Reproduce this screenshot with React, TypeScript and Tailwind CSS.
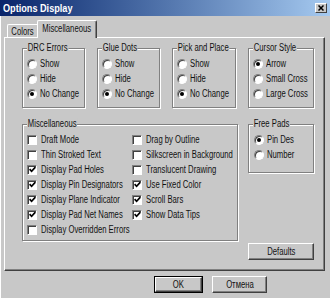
import React from 'react';

// the dialog font is narrower than any installed face, so labels are squeezed horizontally
const T = ({ children, className = '' }: { children: React.ReactNode; className?: string }) => (
  <span className={`inline-block whitespace-nowrap scale-x-[0.77] ${className}`}>{children}</span>
);

const Tick = () => (
  <svg width="7" height="7" viewBox="0 0 7 7">
    <path d="M0.6 3.2 L2.6 5.3 L6.4 1.2" stroke="#000" strokeWidth="1.7" fill="none" />
  </svg>
);

function CheckBox({ label, checked }: { label: string; checked?: boolean }) {
  return (
    <div className="flex items-center h-[15px] gap-[4px]">
      <span className="w-[10px] h-[10px] shrink-0 bg-white border border-t-[#808080] border-l-[#808080] border-r-white border-b-white shadow-[inset_1px_1px_0_#404040] flex items-center justify-center">
        {checked && <Tick />}
      </span>
      <T className="origin-left">{label}</T>
    </div>
  );
}

function Radio({ label, checked }: { label: string; checked?: boolean }) {
  return (
    <div className="flex items-center h-[15px] gap-[3px]">
      <span className="w-[10px] h-[10px] shrink-0 rounded-full bg-white border border-t-[#808080] border-l-[#808080] border-r-white border-b-white shadow-[inset_1px_1px_0_#404040] flex items-center justify-center">
        {checked && <span className="w-[4px] h-[4px] rounded-full bg-black" />}
      </span>
      <T className="origin-left">{label}</T>
    </div>
  );
}

function Group({ title, className, children }: { title: string; className: string; children: React.ReactNode }) {
  return (
    <div className={`relative border border-[#808080] shadow-[inset_1px_1px_0_#fff,1px_1px_0_#fff] ${className}`}>
      <T className="absolute left-[4px] top-[-7px] px-[1px] leading-[12px] bg-[#c8c8c8] origin-left">{title}</T>
      {children}
    </div>
  );
}

function Button({ label, className, isDefault }: { label: string; className: string; isDefault?: boolean }) {
  return (
    <div className={`${isDefault ? 'border border-black' : ''} ${className}`}>
      <div className="w-full h-full flex items-center justify-center border border-t-white border-l-white border-r-[#404040] border-b-[#404040] shadow-[inset_-1px_-1px_0_#808080]">
        <T className="origin-center">{label}</T>
      </div>
    </div>
  );
}

const radioGroups = [
  { title: 'DRC Errors', w: 'w-[63px]', items: ['Show', 'Hide', 'No Change'], sel: 2 },
  { title: 'Glue Dots', w: 'w-[63px]', items: ['Show', 'Hide', 'No Change'], sel: 2 },
  { title: 'Pick and Place', w: 'w-[64px]', items: ['Show', 'Hide', 'No Change'], sel: 2 },
  { title: 'Cursor Style', w: 'w-[66px]', items: ['Arrow', 'Small Cross', 'Large Cross'], sel: 0 },
];

const leftChecks: [string, boolean][] = [
  ['Draft Mode', false],
  ['Thin Stroked Text', false],
  ['Display Pad Holes', true],
  ['Display Pin Designators', true],
  ['Display Plane Indicator', true],
  ['Display Pad Net Names', true],
  ['Display Overridden Errors', false],
];

const rightChecks: [string, boolean][] = [
  ['Drag by Outline', false],
  ['Silkscreen in Background', false],
  ['Translucent Drawing', false],
  ['Use Fixed Color', true],
  ['Scroll Bars', true],
  ['Show Data Tips', true],
];

export default function App() {
  return (
    <div className="w-[330px] h-[298px] overflow-hidden bg-[#c8c8c8] text-[#111] text-[10px] font-['Liberation_Sans',Arial,sans-serif]">
      {/* Title bar */}
      <div className="h-[16px] flex items-center pl-[3px] pr-[3px] bg-linear-to-r from-[#0a246a] to-[#a6caf0]">
        <span className="inline-block origin-left scale-x-[0.83] text-white font-bold text-[11px] leading-none whitespace-nowrap">
          Options Display
        </span>
        <div className="ml-auto w-[12px] h-[10px] bg-[#c8c8c8] border border-t-white border-l-white border-r-[#404040] border-b-[#404040] flex items-center justify-center">
          <svg width="6" height="6" viewBox="0 0 6 6">
            <path d="M0.5 0.5 L5.5 5.5 M5.5 0.5 L0.5 5.5" stroke="#000" strokeWidth="1.5" />
          </svg>
        </div>
      </div>

      <div className="border-l border-l-white h-[282px] pl-[3px] pt-[4px]">
        {/* Tabs */}
        <div className="flex items-end pl-[3px] h-[17px]">
          <div className="w-[30px] h-[13px] flex items-center justify-center border-t border-l border-t-white border-l-white rounded-tl-[2px]">
            <T className="origin-center">Colors</T>
          </div>
          <div className="relative z-10 w-[60px] h-[18px] mb-[-1px] pb-[2px] flex items-center justify-center bg-[#c8c8c8] border-t border-l border-r border-t-white border-l-white border-r-[#404040] shadow-[inset_-1px_0_0_#808080] rounded-t-[2px]">
            <T className="origin-center">Miscellaneous</T>
          </div>
        </div>

        {/* Tab panel */}
        <div className="w-[321px] h-[234px] border border-t-white border-l-white border-r-[#404040] border-b-[#404040] shadow-[inset_-1px_-1px_0_#808080] pt-[10px] pl-[17px]">
          <div className="flex gap-[12px]">
            {radioGroups.map((g) => (
              <Group key={g.title} title={g.title} className={`${g.w} h-[60px] pt-[7px] pl-[4px]`}>
                {g.items.map((it, i) => (
                  <Radio key={it} label={it} checked={i === g.sel} />
                ))}
              </Group>
            ))}
          </div>

          <div className="flex gap-[10px] mt-[16px]">
            <Group title="Miscellaneous" className="w-[216px] h-[117px] pt-[7px] pl-[4px] flex">
              <div className="w-[105px]">
                {leftChecks.map(([l, c]) => (
                  <CheckBox key={l} label={l} checked={c} />
                ))}
              </div>
              <div>
                {rightChecks.map(([l, c]) => (
                  <CheckBox key={l} label={l} checked={c} />
                ))}
              </div>
            </Group>

            <div className="flex flex-col">
              <Group title="Free Pads" className="w-[66px] h-[49px] pt-[7px] pl-[5px]">
                <Radio label="Pin Des" checked />
                <Radio label="Number" />
              </Group>
              <Button label="Defaults" className="w-[66px] h-[17px] mt-[70px]" />
            </div>
          </div>
        </div>

        {/* Dialog buttons */}
        <div className="flex gap-[9px] pl-[150px] mt-[5px]">
          <Button label="OK" className="w-[49px] h-[17px]" isDefault />
          <Button label="Отмена" className="w-[55px] h-[17px]" />
        </div>
      </div>
    </div>
  );
}
